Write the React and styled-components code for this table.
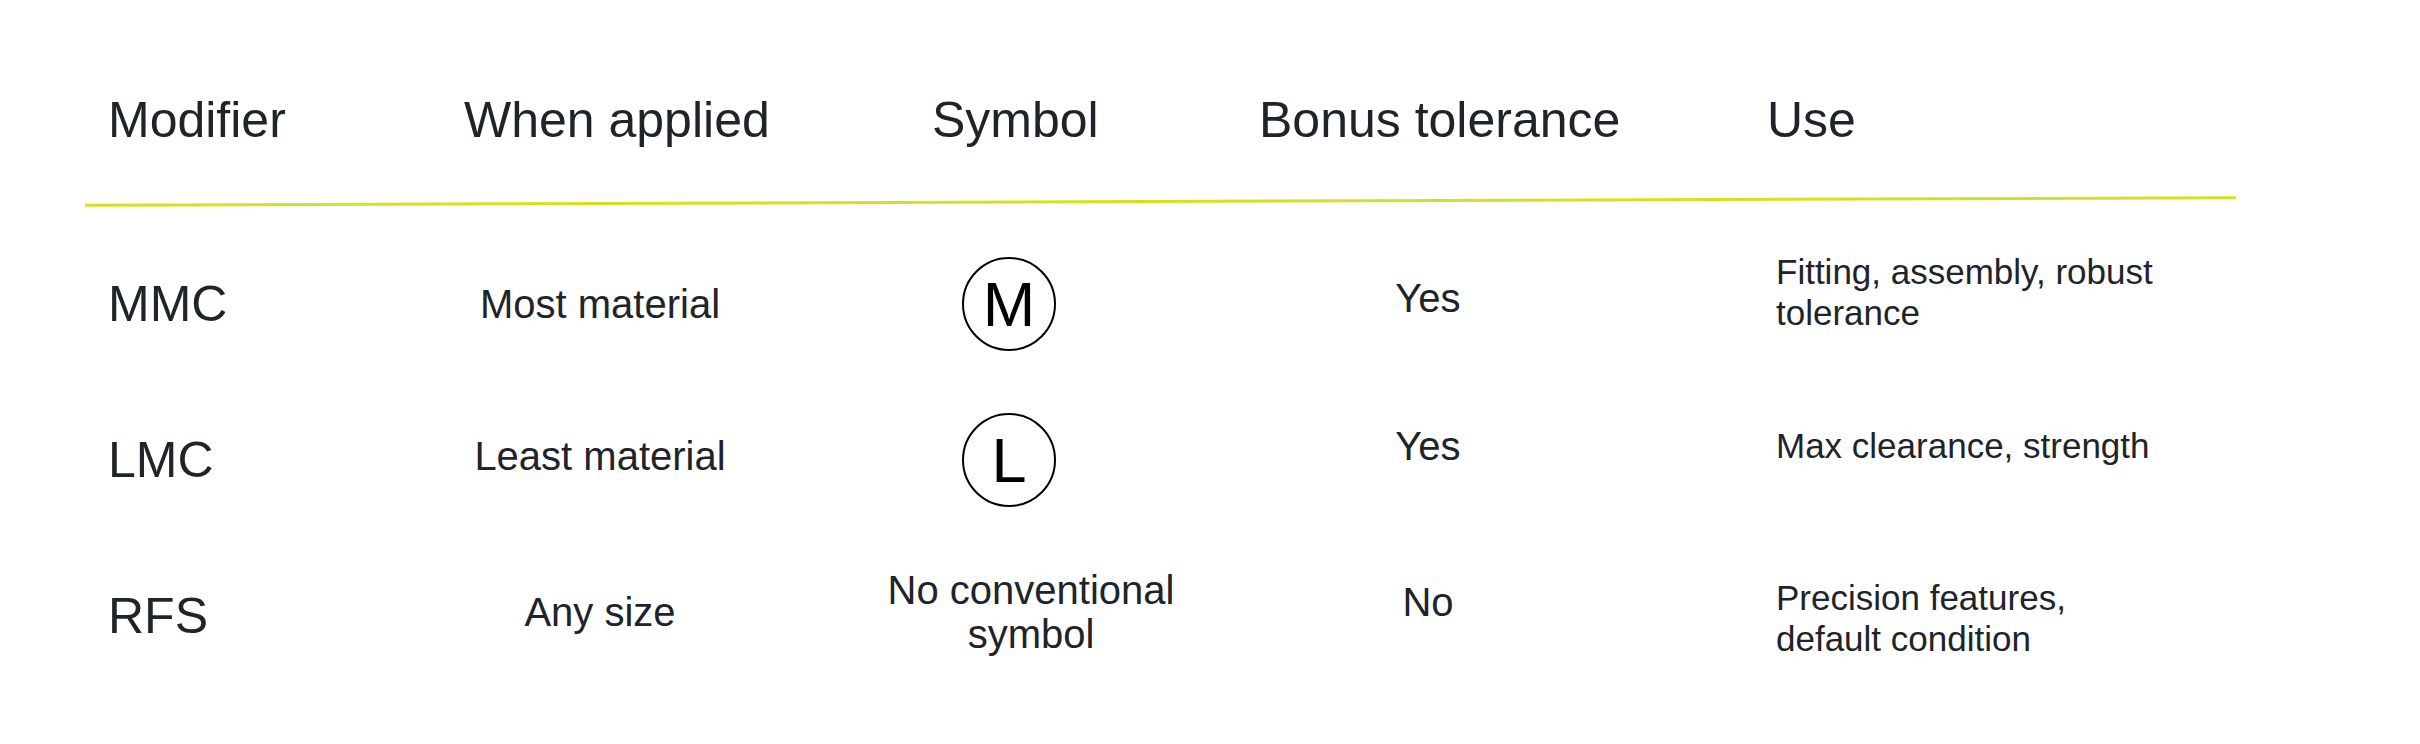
import React from "react";
import styled, { createGlobalStyle } from "styled-components";

const GlobalStyle = createGlobalStyle`
  body {
    margin: 0;
    background: #ffffff;
    font-family: "Liberation Sans", Arial, Helvetica, sans-serif;
    color: #1e2429;
  }
`;

const COLUMNS = "379px 272px 523px 338px 1fr";

const Table = styled.div`
  width: 2151px;
  margin-left: 85px;
  padding-top: 92px;
`;

const HeaderRow = styled.div`
  display: grid;
  grid-template-columns: ${COLUMNS};
`;

const HeaderCell = styled.div`
  padding-left: ${(p) => p.indent || 0}px;
  font-size: 50px;
  line-height: 57px;
  white-space: nowrap;
`;

const Divider = styled.div`
  height: 3px;
  margin-top: 51px;
  background: #d8e01e;
  transform: rotate(-0.2deg);
`;

const Body = styled.div`
  margin-top: 23px;
`;

const Row = styled.div`
  display: grid;
  grid-template-columns: ${COLUMNS};
  align-items: center;
  height: 156px;
`;

const Cell = styled.div`
  display: flex;
  flex-direction: column;
  align-items: ${(p) => (p.center ? "center" : "flex-start")};
  text-align: ${(p) => (p.center ? "center" : "left")};
  padding-left: ${(p) => p.indent || 0}px;
  padding-bottom: ${(p) => Math.max(0, (p.lift || 0) * 2)}px;
  padding-top: ${(p) => Math.max(0, -(p.lift || 0) * 2)}px;
`;

const Code = styled.span`
  font-size: 50px;
  line-height: 57px;
`;

const Plain = styled.span`
  font-size: 40px;
  line-height: 44px;
  max-width: ${(p) => p.wrap || 600}px;
`;

const UseText = styled.span`
  font-size: 35px;
  line-height: 41px;
  max-width: 400px;
`;

const SymbolRing = styled.div`
  width: 94px;
  height: 94px;
  box-sizing: border-box;
  border: 2px solid #000;
  border-radius: 50%;
  margin-right: 44px;
  display: flex;
  align-items: center;
  justify-content: center;
  font-size: 63px;
  line-height: 1;
  color: #000;
`;

const rows = [
  {
    code: "MMC",
    when: "Most material",
    symbol: "M",
    bonus: "Yes",
    use: "Fitting, assembly, robust tolerance",
    lift: { when: 0, symbol: 0, bonus: 6, use: 12 },
  },
  {
    code: "LMC",
    when: "Least material",
    symbol: "L",
    bonus: "Yes",
    use: "Max clearance, strength",
    lift: { when: 4, symbol: 0, bonus: 14, use: 15 },
  },
  {
    code: "RFS",
    when: "Any size",
    symbol: null,
    bonus: "No",
    use: "Precision features, default condition",
    lift: { when: 4, symbol: 4, bonus: 14, use: -2 },
  },
];

export default function App() {
  return (
    <>
      <GlobalStyle />
      <Table>
        <HeaderRow>
          <HeaderCell indent={23}>Modifier</HeaderCell>
          <HeaderCell>When applied</HeaderCell>
          <HeaderCell indent={196}>Symbol</HeaderCell>
          <HeaderCell>Bonus tolerance</HeaderCell>
          <HeaderCell indent={170}>Use</HeaderCell>
        </HeaderRow>
        <Divider />
        <Body>
          {rows.map((row) => (
            <Row key={row.code}>
              <Cell indent={23}>
                <Code>{row.code}</Code>
              </Cell>
              <Cell center lift={row.lift.when}>
                <Plain>{row.when}</Plain>
              </Cell>
              <Cell center indent={67} lift={row.lift.symbol}>
                {row.symbol ? (
                  <SymbolRing>{row.symbol}</SymbolRing>
                ) : (
                  <Plain wrap={320}>No conventional symbol</Plain>
                )}
              </Cell>
              <Cell center lift={row.lift.bonus}>
                <Plain>{row.bonus}</Plain>
              </Cell>
              <Cell indent={179} lift={row.lift.use}>
                <UseText>{row.use}</UseText>
              </Cell>
            </Row>
          ))}
        </Body>
      </Table>
    </>
  );
}
